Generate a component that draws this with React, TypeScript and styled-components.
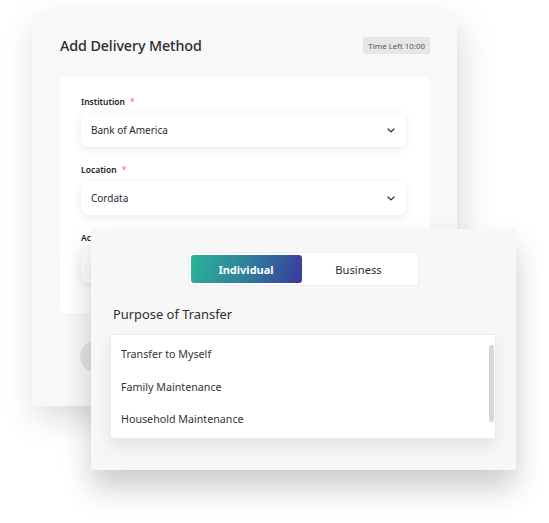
import React from "react";
import styled, { createGlobalStyle } from "styled-components";

const GlobalStyle = createGlobalStyle`
  html, body {
    margin: 0;
    padding: 0;
    background: #ffffff;
  }
  body {
    font-family: "Noto Sans", "Open Sans", sans-serif;
    color: #2b2b2b;
  }
`;

const Stage = styled.div`
  position: relative;
  width: 549px;
  height: 523px;
  overflow: hidden;
  background: #ffffff;
`;

const BackCard = styled.div`
  margin: 13px 0 0 32px;
  width: 425px;
  height: 393px;
  box-sizing: border-box;
  padding: 24px 27px 0 28px;
  background: #f8f8f8;
  border-radius: 3px;
  box-shadow: 4px 12px 34px rgba(0, 0, 0, 0.15);
  display: flex;
  flex-direction: column;
`;

const Header = styled.div`
  display: flex;
  align-items: center;
  justify-content: space-between;
  height: 17px;
`;

const Title = styled.h1`
  margin: 0;
  font-size: 14.3px;
  font-weight: 500;
  color: #2b2b2b;
  letter-spacing: -0.1px;
`;

const Badge = styled.span`
  background: #e6e6e6;
  color: #555;
  font-size: 7.9px;
  padding: 0 5px;
  height: 17px;
  display: flex;
  align-items: center;
  border-radius: 2px;
`;

const FormPanel = styled.div`
  margin-top: 23px;
  height: 236px;
  background: #ffffff;
  border-radius: 4px;
  padding: 19px 24px 0 21px;
  box-sizing: border-box;
  display: flex;
  flex-direction: column;
`;

const Field = styled.div`
  display: flex;
  flex-direction: column;
  margin-bottom: 17px;
`;

const Label = styled.label`
  font-size: 8.5px;
  font-weight: 600;
  color: #222;
  line-height: 12px;
  margin-bottom: 5px;
`;

const Required = styled.span`
  color: #ef6a6a;
  margin-left: 5px;
  font-weight: 400;
`;

const Select = styled.div`
  height: 34px;
  border-radius: 8px;
  background: #ffffff;
  box-shadow: 0 2px 8px rgba(0, 0, 0, 0.09);
  display: flex;
  align-items: center;
  justify-content: space-between;
  padding: 0 11px 0 10px;
  font-size: 10px;
  color: #2b2b2b;
`;

const BackButton = styled.div`
  margin: 28px 0 0 20px;
  width: 60px;
  height: 31px;
  border-radius: 16px;
  background: #e4e4e4;
`;

const FrontCard = styled.div`
  position: absolute;
  left: 91px;
  top: 229px;
  width: 425px;
  height: 241px;
  box-sizing: border-box;
  background: #f7f7f7;
  border-radius: 3px;
  box-shadow: 0 18px 30px rgba(0, 0, 0, 0.2);
  padding: 23px 20px 0 19px;
  display: flex;
  flex-direction: column;
`;

const Toggle = styled.div`
  align-self: center;
  display: flex;
  padding: 2px;
  background: #ffffff;
  border: 1px solid #eeeeee;
  border-radius: 3px;
  width: 231px;
  height: 34px;
  box-sizing: border-box;
`;

const ToggleOption = styled.div<{ $active?: boolean }>`
  flex: ${(p) => (p.$active ? "0 0 111px" : "1")};
  display: flex;
  align-items: center;
  justify-content: center;
  border-radius: 3px;
  font-size: ${(p) => (p.$active ? "11px" : "11.2px")};
  font-weight: ${(p) => (p.$active ? 700 : 400)};
  color: ${(p) => (p.$active ? "#ffffff" : "#2b2b2b")};
  background: ${(p) =>
    p.$active ? "linear-gradient(110deg, #2bb597 0%, #2f7f9c 50%, #3b399d 100%)" : "transparent"};
`;

const SectionTitle = styled.h2`
  margin: 20px 0 0 3px;
  font-size: 12.9px;
  font-weight: 400;
  color: #2f2f2f;
  line-height: 16px;
`;

const ListBox = styled.div`
  position: relative;
  margin-top: 12px;
  height: 105px;
  background: #ffffff;
  border: 1px solid #ececec;
  border-radius: 3px;
  box-shadow: 0 8px 16px rgba(0, 0, 0, 0.08);
  box-sizing: border-box;
  padding: 3px 0 0 10px;
  display: flex;
  flex-direction: column;
`;

const Option = styled.div`
  height: 32.5px;
  display: flex;
  align-items: center;
  font-size: 10.7px;
  color: #333;
`;

const ScrollThumb = styled.div`
  position: absolute;
  right: 1px;
  top: 10px;
  width: 5px;
  height: 77px;
  border-radius: 2px;
  background: #d8d8d8;
`;

const Chevron = () => (
  <svg width="8" height="5" viewBox="0 0 8 5" fill="none">
    <path d="M1 1 L4 3.9 L7 1" stroke="#333" strokeWidth="1.3" strokeLinecap="round" strokeLinejoin="round" />
  </svg>
);

const fields = [
  { label: "Institution", value: "Bank of America" },
  { label: "Location", value: "Cordata" },
  { label: "Account", value: "" },
];

const purposes = ["Transfer to Myself", "Family Maintenance", "Household Maintenance"];

export default function App() {
  return (
    <>
      <GlobalStyle />
      <Stage>
        <BackCard>
          <Header>
            <Title>Add Delivery Method</Title>
            <Badge>Time Left 10:00</Badge>
          </Header>
          <FormPanel>
            {fields.map((f) => (
              <Field key={f.label}>
                <Label>
                  {f.label}
                  <Required>*</Required>
                </Label>
                <Select>
                  <span>{f.value}</span>
                  <Chevron />
                </Select>
              </Field>
            ))}
          </FormPanel>
          <BackButton />
        </BackCard>

        <FrontCard>
          <Toggle>
            <ToggleOption $active>Individual</ToggleOption>
            <ToggleOption>Business</ToggleOption>
          </Toggle>
          <SectionTitle>Purpose of Transfer</SectionTitle>
          <ListBox>
            {purposes.map((p) => (
              <Option key={p}>{p}</Option>
            ))}
            <ScrollThumb />
          </ListBox>
        </FrontCard>
      </Stage>
    </>
  );
}
